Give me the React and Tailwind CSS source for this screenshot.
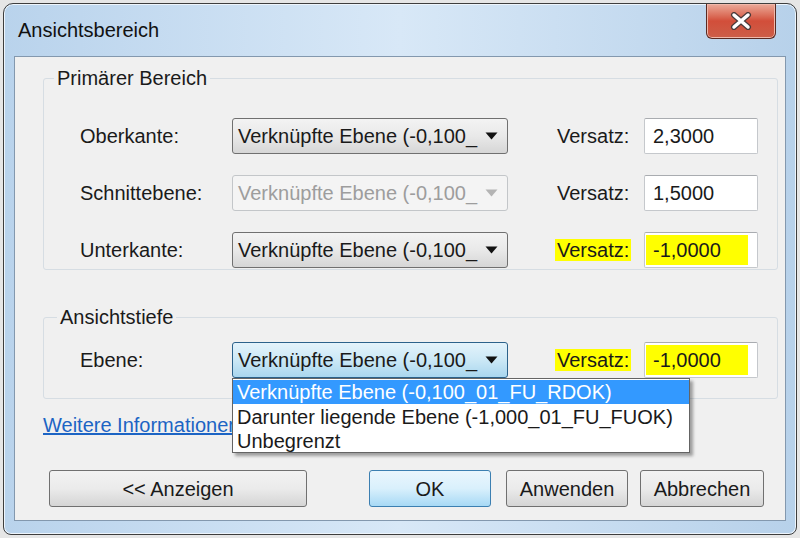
import React from 'react'

const font = { fontFamily: '"Liberation Sans", Arial, sans-serif' }

function Arrow({ disabled }) {
  return (
    <svg width="13" height="8" viewBox="0 0 13 8" className="shrink-0">
      <path d="M0.5 0.5 L12.5 0.5 L6.5 7.5 Z" fill={disabled ? '#b4b4b4' : '#111'} />
    </svg>
  )
}

function Combo({ disabled, focused, children }) {
  let cls = 'border-[#707070] bg-linear-to-b from-[#f3f3f3] via-[#e9e9e9] to-[#d6d6d6] text-[#1a1a1a]'
  if (disabled) cls = 'border-[#c3c6c9] bg-[#f4f4f4] text-[#9d9d9d]'
  if (focused) cls = 'border-[#2c628b] bg-linear-to-b from-[#e4f3fb] via-[#cbe8f6] to-[#a9d6ee] text-[#1a1a1a]'
  return (
    <div className={`relative w-[276px] h-[36px] shrink-0 flex items-center justify-between pl-[5px] pr-[9px] border rounded-[3px] ${cls}`}>
      <span className="whitespace-nowrap">Verknüpfte Ebene (-0,100_</span>
      <Arrow disabled={disabled} />
      {children}
    </div>
  )
}

function Field({ value, marked }) {
  return (
    <div className="w-[114px] h-[36px] shrink-0 border border-[#c5c8cc] border-t-[#a9acb0] rounded-[2px] bg-white flex items-center pl-[1px]">
      {marked ? (
        <span className="w-[102px] h-[30px] bg-[#ffff00] flex items-center pl-[7px]">{value}</span>
      ) : (
        <span className="pl-[7px]">{value}</span>
      )}
    </div>
  )
}

function Row({ label, value, disabled, marked, focused, children }) {
  return (
    <div className="flex items-center h-[36px]">
      <span className="w-[188px] pl-[36px] shrink-0">{label}</span>
      <Combo disabled={disabled} focused={focused}>{children}</Combo>
      <span className="ml-[47px] w-[89px] shrink-0">
        <span className={marked ? 'bg-[#ffff00] px-[2px]' : 'px-[2px]'}>Versatz:</span>
      </span>
      <Field value={value} marked={marked} />
    </div>
  )
}

function Btn({ children, w, primary, className = '' }) {
  const cls = primary
    ? 'border-[#3c7fb1] bg-linear-to-b from-[#eaf6fd] via-[#d9f0fc] to-[#a7d9f5]'
    : 'border-[#707070] bg-linear-to-b from-[#f2f2f2] via-[#ebebeb] to-[#d5d5d5]'
  return (
    <div className={`${w} h-[37px] border rounded-[3px] flex items-center justify-center ${cls} ${className}`}>
      {children}
    </div>
  )
}

export default function App() {
  return (
    <div className="w-[800px] h-[538px] bg-[#e6e6e6] p-[3px] text-[20px] text-[#1a1a1a] overflow-hidden" style={font}>
      <div className="h-full flex flex-col rounded-t-[10px] rounded-b-[8px] border border-[#3e3e3e] bg-linear-to-r from-[#b9d3ec] via-[#d8e8f7] to-[#b7d1ea] shadow-[inset_0_0_0_1px_#eef5fc]">
        <div className="h-[52px] flex items-start justify-between shrink-0">
          <span className="self-center pl-[14px] text-[#111]">Ansichtsbereich</span>
          <div className="mr-[20px] w-[70px] h-[35px] rounded-b-[6px] border border-t-0 border-[#5a2a22] bg-linear-to-b from-[#e9a999] via-[#d24e3a] to-[#cc5e48] flex items-center justify-center shadow-[inset_0_0_0_1px_#f0b8aa]">
            <svg width="22" height="18" viewBox="0 0 22 18">
              <path d="M4 3 L18 15 M18 3 L4 15" stroke="#4a3a3a" strokeWidth="6" strokeLinecap="round" />
              <path d="M4 3 L18 15 M18 3 L4 15" stroke="#fff" strokeWidth="3.5" strokeLinecap="round" />
            </svg>
          </div>
        </div>

        <div className="flex-1 mx-[10px] mb-[13px] border border-[#8398ae] bg-[#f0f0f0] flex flex-col pl-[28px] pr-[7px]">
          <fieldset className="mt-[6px] border border-[#d6dde3] rounded-[3px] pb-[1px]">
            <legend className="ml-[10px] px-[3px]">Primärer Bereich</legend>
            <div className="flex flex-col gap-[21px] pt-[25px]">
              <Row label="Oberkante:" value="2,3000" />
              <Row label="Schnittebene:" value="1,5000" disabled />
              <Row label="Unterkante:" value="-1,0000" marked />
            </div>
          </fieldset>

          <fieldset className="mt-[32px] border border-[#d6dde3] rounded-[3px] pb-[20px] relative z-10">
            <legend className="ml-[13px] px-[3px]">Ansichtstiefe</legend>
            <div className="pt-[10px]">
              <Row label="Ebene:" value="-1,0000" marked focused>
                <div className="absolute left-[-1px] top-[35px] w-[458px] border border-[#646464] bg-white shadow-[3px_3px_3px_rgba(0,0,0,0.35)] flex flex-col">
                  <div className="h-[24px] mt-[1px] bg-[#3399ff] text-white flex items-center pl-[4px] whitespace-nowrap">Verknüpfte Ebene (-0,100_01_FU_RDOK)</div>
                  <div className="h-[26px] flex items-center pl-[4px] whitespace-nowrap">Darunter liegende Ebene (-1,000_01_FU_FUOK)</div>
                  <div className="h-[22px] flex items-center pl-[4px] whitespace-nowrap">Unbegrenzt</div>
                </div>
              </Row>
            </div>
          </fieldset>

          <div className="mt-[14px] h-[24px] flex items-center">
            <span className="text-[#1c64c4] underline whitespace-nowrap">Weitere Informationen</span>
          </div>

          <div className="mt-[33px] flex items-center">
            <Btn w="w-[258px]" className="ml-[6px]">&lt;&lt; Anzeigen</Btn>
            <Btn w="w-[122px]" primary className="ml-[62px]">OK</Btn>
            <Btn w="w-[122px]" className="ml-[15px]">Anwenden</Btn>
            <Btn w="w-[124px]" className="ml-[12px]">Abbrechen</Btn>
          </div>
        </div>
      </div>
    </div>
  )
}
